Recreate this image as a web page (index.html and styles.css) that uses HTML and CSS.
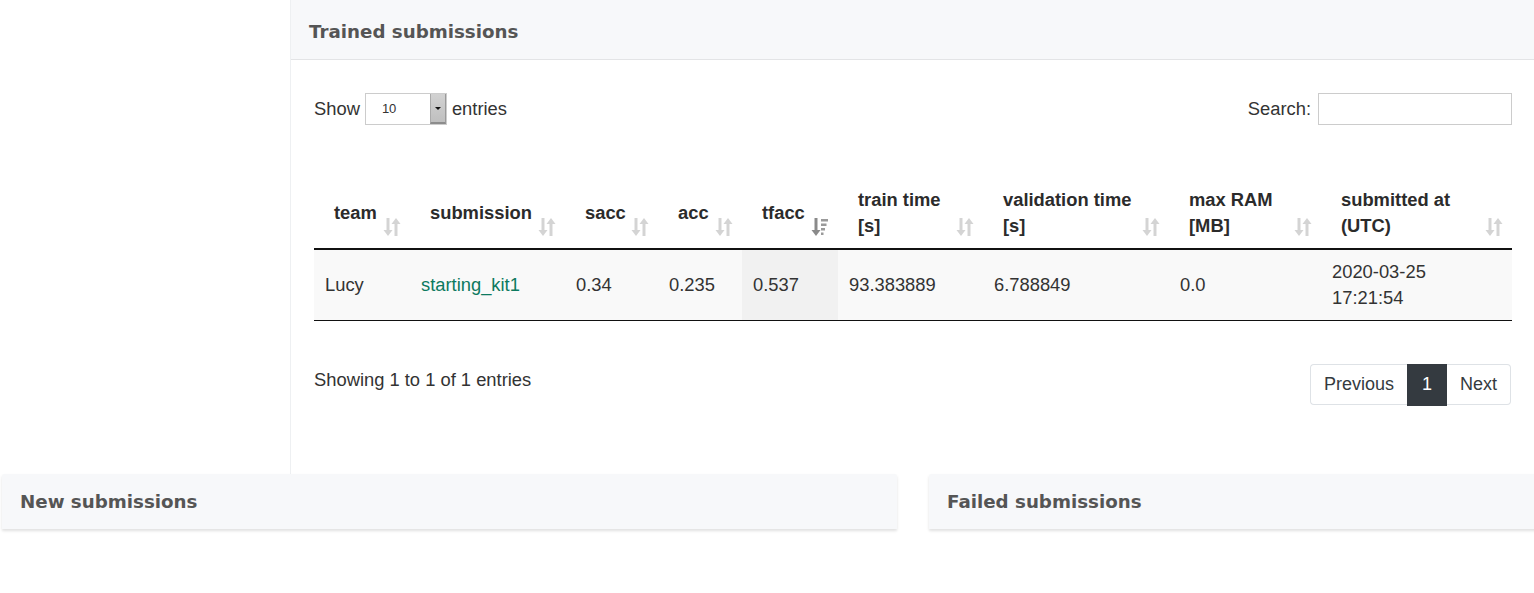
FILE: index.html
```html
<!DOCTYPE html>
<html>
<head>
<meta charset="utf-8">
<title>Submissions</title>
<link rel="stylesheet" href="styles.css">
</head>
<body>
<div class="page">
  <div class="top-row">
    <div class="spacer"></div>
    <section class="card main-card">
      <header class="card-header"><h2>Trained submissions</h2></header>
      <div class="card-body">
        <div class="controls">
          <div class="length">
            <span>Show</span>
            <span class="select"><span class="select-val">10</span><span class="select-btn"><span class="tri"></span></span></span>
            <span>entries</span>
          </div>
          <div class="search">
            <span>Search:</span>
            <input class="search-input" type="text">
          </div>
        </div>
        <table class="grid">
          <colgroup>
            <col class="c1"><col class="c2"><col class="c3"><col class="c4"><col class="c5"><col class="c6"><col class="c7"><col class="c8"><col class="c9">
          </colgroup>
          <thead>
            <tr>
              <th>team<span class="sort"><svg width="18" height="20" viewBox="0 0 18 20"><path d="M5 1v13" stroke="#d4d4d4" stroke-width="3"/><path d="M0.5 13h9l-4.5 6z" fill="#d4d4d4"/><path d="M13 6v13" stroke="#d4d4d4" stroke-width="3"/><path d="M8.5 7h9l-4.5-6z" fill="#d4d4d4"/></svg></span></th>
              <th>submission<span class="sort"><svg width="18" height="20" viewBox="0 0 18 20"><path d="M5 1v13" stroke="#d4d4d4" stroke-width="3"/><path d="M0.5 13h9l-4.5 6z" fill="#d4d4d4"/><path d="M13 6v13" stroke="#d4d4d4" stroke-width="3"/><path d="M8.5 7h9l-4.5-6z" fill="#d4d4d4"/></svg></span></th>
              <th>sacc<span class="sort"><svg width="18" height="20" viewBox="0 0 18 20"><path d="M5 1v13" stroke="#d4d4d4" stroke-width="3"/><path d="M0.5 13h9l-4.5 6z" fill="#d4d4d4"/><path d="M13 6v13" stroke="#d4d4d4" stroke-width="3"/><path d="M8.5 7h9l-4.5-6z" fill="#d4d4d4"/></svg></span></th>
              <th>acc<span class="sort"><svg width="18" height="20" viewBox="0 0 18 20"><path d="M5 1v13" stroke="#d4d4d4" stroke-width="3"/><path d="M0.5 13h9l-4.5 6z" fill="#d4d4d4"/><path d="M13 6v13" stroke="#d4d4d4" stroke-width="3"/><path d="M8.5 7h9l-4.5-6z" fill="#d4d4d4"/></svg></span></th>
              <th>tfacc<span class="sort"><svg width="18" height="20" viewBox="0 0 18 20"><path d="M5 1v13" stroke="#8a8a8a" stroke-width="3"/><path d="M0.5 13h9l-4.5 6z" fill="#8a8a8a"/><path d="M10 2h7v2.5h-7zM10 6.5h5.5v2.5h-5.5zM10 11h4v2.5h-4zM10 15.5h2.5v2.5h-2.5z" fill="#9a9a9a"/></svg></span></th>
              <th>train time [s]<span class="sort"><svg width="18" height="20" viewBox="0 0 18 20"><path d="M5 1v13" stroke="#d4d4d4" stroke-width="3"/><path d="M0.5 13h9l-4.5 6z" fill="#d4d4d4"/><path d="M13 6v13" stroke="#d4d4d4" stroke-width="3"/><path d="M8.5 7h9l-4.5-6z" fill="#d4d4d4"/></svg></span></th>
              <th>validation time [s]<span class="sort"><svg width="18" height="20" viewBox="0 0 18 20"><path d="M5 1v13" stroke="#d4d4d4" stroke-width="3"/><path d="M0.5 13h9l-4.5 6z" fill="#d4d4d4"/><path d="M13 6v13" stroke="#d4d4d4" stroke-width="3"/><path d="M8.5 7h9l-4.5-6z" fill="#d4d4d4"/></svg></span></th>
              <th>max RAM [MB]<span class="sort"><svg width="18" height="20" viewBox="0 0 18 20"><path d="M5 1v13" stroke="#d4d4d4" stroke-width="3"/><path d="M0.5 13h9l-4.5 6z" fill="#d4d4d4"/><path d="M13 6v13" stroke="#d4d4d4" stroke-width="3"/><path d="M8.5 7h9l-4.5-6z" fill="#d4d4d4"/></svg></span></th>
              <th>submitted at (UTC)<span class="sort"><svg width="18" height="20" viewBox="0 0 18 20"><path d="M5 1v13" stroke="#d4d4d4" stroke-width="3"/><path d="M0.5 13h9l-4.5 6z" fill="#d4d4d4"/><path d="M13 6v13" stroke="#d4d4d4" stroke-width="3"/><path d="M8.5 7h9l-4.5-6z" fill="#d4d4d4"/></svg></span></th>
            </tr>
          </thead>
          <tbody>
            <tr>
              <td>Lucy</td>
              <td><a class="link" href="#">starting_kit1</a></td>
              <td>0.34</td>
              <td>0.235</td>
              <td class="sorted">0.537</td>
              <td>93.383889</td>
              <td>6.788849</td>
              <td>0.0</td>
              <td>2020-03-25 17:21:54</td>
            </tr>
          </tbody>
        </table>
        <div class="footer-row">
          <div class="info">Showing 1 to 1 of 1 entries</div>
          <nav class="pager">
            <span class="page-item first">Previous</span>
            <span class="page-item active">1</span>
            <span class="page-item last">Next</span>
          </nav>
        </div>
      </div>
    </section>
  </div>
  <div class="bottom-row">
    <section class="card small-card left-card"><header class="small-header"><h2>New submissions</h2></header></section>
    <section class="card small-card right-card"><header class="small-header"><h2>Failed submissions</h2></header></section>
  </div>
</div>
</body>
</html>
```
FILE: styles.css
```css
html, body {
  margin: 0;
  padding: 0;
  background: #fff;
  overflow: hidden;
}
body {
  width: 1534px;
  font-family: "Liberation Sans", Arial, sans-serif;
  font-size: 18.35px;
  color: #333;
}
.page {
  width: 1534px;
  overflow: hidden;
}
.top-row {
  display: flex;
}
.spacer {
  width: 290px;
  flex: none;
}
.main-card {
  width: 1250px;
  flex: none;
  border-left: 1px solid #eef0f2;
  box-sizing: border-box;
}
.card-header {
  height: 60px;
  box-sizing: border-box;
  background: #f7f8fa;
  border-bottom: 1px solid #e3e4e6;
  display: flex;
  align-items: center;
  padding: 5px 0 0 18px;
}
h2 {
  margin: 0;
  font-family: "DejaVu Sans", sans-serif;
  font-weight: bold;
  font-size: 18.25px;
  color: #555;
  line-height: 24px;
}
.card-body {
  padding: 33px 0 69px 23px;
  width: 1198px;
}
.controls {
  display: flex;
  justify-content: space-between;
  align-items: center;
  height: 32px;
}
.length {
  display: flex;
  align-items: center;
  gap: 5px;
}
.select {
  display: flex;
  width: 82px;
  height: 32px;
  border: 1px solid #ccc;
  box-sizing: border-box;
  background: #fff;
}
.select-val {
  flex: 1;
  font-size: 13px;
  line-height: 30px;
  padding-left: 16px;
  color: #333;
}
.select-btn {
  width: 16px;
  background: linear-gradient(#d2d2d2, #bfbfbf);
  border-left: 1px solid #aaa;
  border-bottom: 2px solid #8c8c8c;
  border-right: 1px solid #9a9a9a;
  display: flex;
  align-items: center;
  justify-content: center;
  box-sizing: border-box;
}
.tri {
  width: 0;
  height: 0;
  border-left: 3px solid transparent;
  border-right: 3px solid transparent;
  border-top: 3px solid #111;
}
.search {
  display: flex;
  align-items: center;
  gap: 7px;
}
.search-input {
  width: 194px;
  height: 32px;
  box-sizing: border-box;
  border: 1px solid #ccc;
  margin: 0;
  padding: 0 6px;
  font: inherit;
}
.grid {
  margin-top: 52px;
  width: 1198px;
  table-layout: fixed;
  border-collapse: collapse;
}
.c1 { width: 96px; }
.c2 { width: 155px; }
.c3 { width: 93px; }
.c4 { width: 84px; }
.c5 { width: 96px; }
.c6 { width: 145px; }
.c7 { width: 186px; }
.c8 { width: 152px; }
.c9 { width: 191px; }
.grid th {
  position: relative;
  text-align: left;
  font-weight: bold;
  color: #2b2b2b;
  line-height: 26px;
  padding: 10px 30px 9px 20px;
  vertical-align: middle;
  border-bottom: 2px solid #111;
  height: 52px;
}
.sort {
  position: absolute;
  right: 9px;
  bottom: 11px;
  width: 18px;
  height: 20px;
  line-height: 0;
}
.grid td {
  line-height: 26px;
  padding: 9px 20px 9px 11px;
  vertical-align: middle;
  background: #f9f9f9;
  border-bottom: 1px solid #111;
  height: 52px;
}
.grid td.sorted {
  background: #f1f1f1;
}
.link {
  color: #0d7a5f;
  text-decoration: none;
}
.footer-row {
  margin-top: 43px;
  display: flex;
  justify-content: space-between;
  align-items: flex-start;
}
.info {
  padding-top: 3px;
  line-height: 26px;
}
.pager {
  display: flex;
  margin-right: 1px;
  font-size: 18px;
}
.page-item {
  display: block;
  line-height: 25px;
  padding: 7px 13px;
  border: 1px solid #dee2e6;
  color: #343a40;
  background: #fff;
}
.page-item.first {
  border-radius: 4px 0 0 4px;
  border-right: none;
}
.page-item.active {
  background: #343a40;
  border-color: #343a40;
  color: #fff;
  padding: 7px 14px 8px;
  margin-bottom: -1px;
}
.page-item.last {
  border-radius: 0 4px 4px 0;
  border-left: none;
}
.bottom-row {
  display: flex;
  gap: 32px;
  padding-left: 2px;
  padding-bottom: 20px;
}
.small-card {
  flex: none;
}
.left-card {
  width: 895px;
}
.right-card {
  width: 620px;
}
.small-header {
  height: 55px;
  box-sizing: border-box;
  background: #f7f8fa;
  box-shadow: 0 2px 3px rgba(0, 0, 0, 0.12);
  display: flex;
  align-items: center;
  padding: 1px 0 0 18px;
  border-radius: 2px 2px 0 0;
}
```
